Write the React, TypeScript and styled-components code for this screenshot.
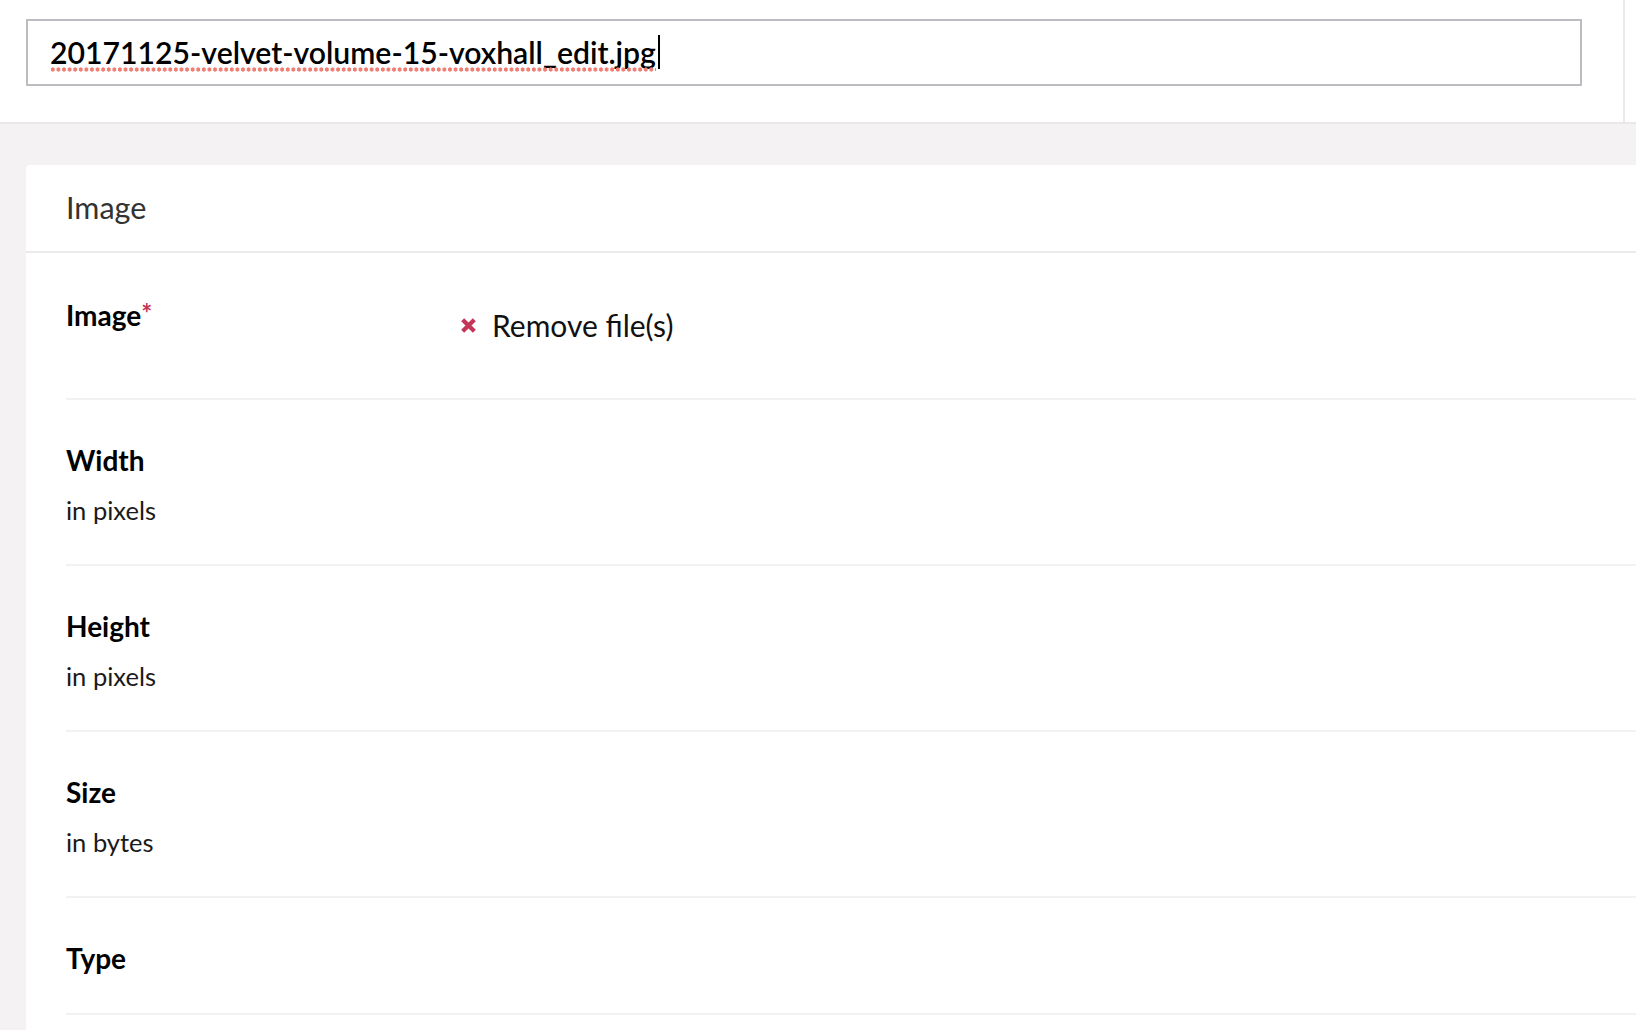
import React from 'react'
import styled, { createGlobalStyle } from 'styled-components'

const GlobalStyle = createGlobalStyle`
    html, body {
        margin: 0;
        padding: 0;
        overflow: hidden;
        background-color: #f4f2f3;
        font-family: Lato, "Noto Sans", sans-serif;
        color: #111111;
    }
`

type Field = {
    label: string
    hint?: string
    required?: boolean
}

const fields: Field[] = [
    { label: 'Image', required: true },
    { label: 'Width', hint: 'in pixels' },
    { label: 'Height', hint: 'in pixels' },
    { label: 'Size', hint: 'in bytes' },
    { label: 'Type' },
]

const RemoveIcon = () => (
    <svg width="17" height="17" viewBox="0 0 16 16">
        <path d="M2.5 2.5 L13.5 13.5 M13.5 2.5 L2.5 13.5" stroke="#c4355a" strokeWidth="4" />
    </svg>
)

const App: React.FC = () => {
    return (
        <>
            <GlobalStyle />
            <TopBar>
                <TitleColumn>
                    <TitleField>
                        <TitleText>20171125-velvet-volume-15-voxhall_edit.jpg</TitleText>
                        <Caret />
                    </TitleField>
                </TitleColumn>
            </TopBar>
            <Content>
                <Card>
                    <CardHeader>Image</CardHeader>
                    {fields.map((f, i) => (
                        <Row key={f.label} first={i === 0}>
                            <LabelCol>
                                <Label>
                                    {f.label}
                                    {f.required && <Star>*</Star>}
                                </Label>
                                {f.hint && <Hint>{f.hint}</Hint>}
                            </LabelCol>
                            {i === 0 && (
                                <RemoveButton>
                                    <RemoveIcon />
                                    <span>Remove file(s)</span>
                                </RemoveButton>
                            )}
                        </Row>
                    ))}
                </Card>
            </Content>
        </>
    )
}

const TopBar = styled.header`
    display: flex;
    height: 122px;
    background-color: #ffffff;
    border-bottom: 2px solid #e9e7e8;
`

const TitleColumn = styled.div`
    box-sizing: border-box;
    width: 1625px;
    padding: 19px 0 0 26px;
    border-right: 2px solid #ebe9ea;
`

const TitleField = styled.div`
    box-sizing: border-box;
    display: flex;
    align-items: center;
    width: 1556px;
    height: 67px;
    padding: 0 0 1px 22px;
    border: 2px solid #bdbcc1;
    background-color: #ffffff;
`

// spellcheck squiggle: a row of round dots under the file name
const TitleText = styled.span`
    position: relative;
    font-size: 30.2px;
    font-weight: 600;
    color: #000000;
    white-space: nowrap;

    &::after {
        content: '';
        position: absolute;
        left: 0;
        right: 0;
        bottom: -2px;
        height: 5px;
        background-image: radial-gradient(circle, #f07e72 1.9px, transparent 2.3px);
        background-size: 5.6px 5px;
        background-repeat: repeat-x;
    }
`

const Caret = styled.span`
    display: inline-block;
    width: 2px;
    height: 34px;
    margin-left: 2px;
    background-color: #000000;
`

const Content = styled.main`
    padding: 41px 0 0 26px;
`

const Card = styled.section`
    width: 1700px;
    min-height: 900px;
    background-color: #ffffff;
    border-radius: 4px 0 0 0;
`

const CardHeader = styled.h2`
    box-sizing: border-box;
    display: flex;
    align-items: center;
    height: 88px;
    margin: 0;
    padding: 0 0 2px 40px;
    font-size: 30.5px;
    font-weight: 400;
    color: #333333;
    border-bottom: 2px solid #ebebeb;
`

const Row = styled.div<{ first?: boolean }>`
    display: flex;
    margin-left: 40px;
    padding: ${p => (p.first ? '44px 0 55px' : '42px 0 37px')};
    border-bottom: 2px solid #f2f2f2;
`

const LabelCol = styled.div`
    width: 394px;
`

const Label = styled.div`
    font-size: 28px;
    font-weight: 700;
    line-height: 36px;
    color: #000000;
`

const Star = styled.span`
    color: #c4355a;
    font-size: 26px;
    line-height: 0;
    vertical-align: 3px;
`

const Hint = styled.div`
    margin: 17px 0 2px;
    font-size: 25.5px;
    line-height: 30px;
    color: #1a1a1a;
`

const RemoveButton = styled.div`
    display: flex;
    align-items: center;
    gap: 15px;
    margin-top: 10px;
    height: 36px;
    font-size: 30px;
    color: #111111;
    cursor: pointer;
`

export default App
